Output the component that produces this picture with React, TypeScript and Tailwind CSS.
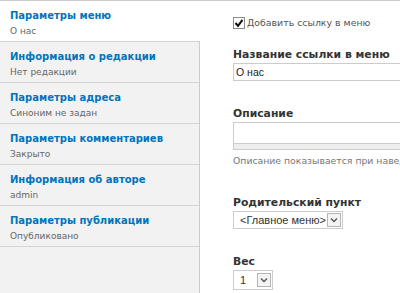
const tabs = [
  { title: 'Параметры меню', sub: 'О нас' },
  { title: 'Информация о редакции', sub: 'Нет редакции' },
  { title: 'Параметры адреса', sub: 'Синоним не задан' },
  { title: 'Параметры комментариев', sub: 'Закрыто' },
  { title: 'Информация об авторе', sub: 'admin' },
  { title: 'Параметры публикации', sub: 'Опубликовано' },
];

function Chevron() {
  return (
    <span className="flex h-[14px] w-[14px] items-center justify-center border border-[#b5b5b5] bg-[#f4f4f4]">
      <svg width="8" height="6" viewBox="0 0 8 6">
        <path d="M1 1.5 L4 4.5 L7 1.5" fill="none" stroke="#555" strokeWidth="1.4" />
      </svg>
    </span>
  );
}

export default function App() {
  return (
    <div className="flex h-[293px] w-[400px] overflow-hidden border-t border-[#ccc] bg-white font-['DejaVu_Sans',sans-serif]">
      <div className="flex w-[200px] shrink-0 flex-col border-r border-[#ccc] bg-[#f2f2f2]">
        {tabs.map((t, i) => (
          <div
            key={t.title}
            className={
              'h-[41px] shrink-0 border-b border-[#d4d4d4] px-[10px] pt-[7px] ' +
              (i === 0 ? 'relative -mr-px bg-white' : '')
            }
          >
            <div className="text-[10px] font-bold leading-[16px] text-[#0074bd]">{t.title}</div>
            <div className="text-[9px] leading-[14px] text-[#666]">{t.sub}</div>
          </div>
        ))}
      </div>

      <div className="min-w-0 flex-1 pl-[33px] pt-[15px] text-[#333]">
        <div className="flex h-[14px] items-center gap-[2px]">
          <span className="flex h-[12px] w-[12px] items-center justify-center border border-[#8a8a8a] bg-white">
            <svg width="10" height="10" viewBox="0 0 10 10">
              <path d="M1.5 5 L4 7.8 L8.5 1.8" fill="none" stroke="#111" strokeWidth="2" />
            </svg>
          </span>
          <span className="whitespace-nowrap text-[9.4px] text-[#555]">Добавить ссылку в меню</span>
        </div>

        <div className="mt-[17px] whitespace-nowrap text-[10.8px] font-bold leading-[16px]">Название ссылки в меню</div>
        <div className="-mr-4 h-[18px] border border-[#ccc] pl-[2px] font-['Liberation_Sans',sans-serif] text-[10.5px] leading-[16px] text-[#222]">
          О нас
        </div>

        <div className="mt-[25px] text-[10.8px] font-bold leading-[16px]">Описание</div>
        <div className="-mr-4 border border-[#ccc]">
          <div className="h-[20px] bg-white" />
          <div className="h-[6px] border-t border-[#ccc] bg-[#eee]" />
        </div>
        <div className="mt-[4px] overflow-hidden whitespace-nowrap text-[9.3px] leading-[14px] text-[#777]">
          Описание показывается при наведении курсора на ссылку
        </div>

        <div className="mt-[27px] whitespace-nowrap text-[10.8px] font-bold leading-[16px]">Родительский пункт</div>
        <div className="flex h-[18px] w-[110px] items-center justify-between border border-[#ccc] pl-[6px] pr-[1px] font-['Liberation_Sans',sans-serif] text-[11px] text-[#333]">
          <span className="whitespace-nowrap">&lt;Главное меню&gt;</span>
          <Chevron />
        </div>

        <div className="mt-[26px] text-[10.8px] font-bold leading-[14px]">Вес</div>
        <div className="mt-[1px] flex h-[20px] w-[40px] items-center justify-between border border-[#ccc] pl-[6px] pr-[1px] font-['Liberation_Sans',sans-serif] text-[11px] text-[#333]">
          <span>1</span>
          <Chevron />
        </div>
      </div>
    </div>
  );
}
